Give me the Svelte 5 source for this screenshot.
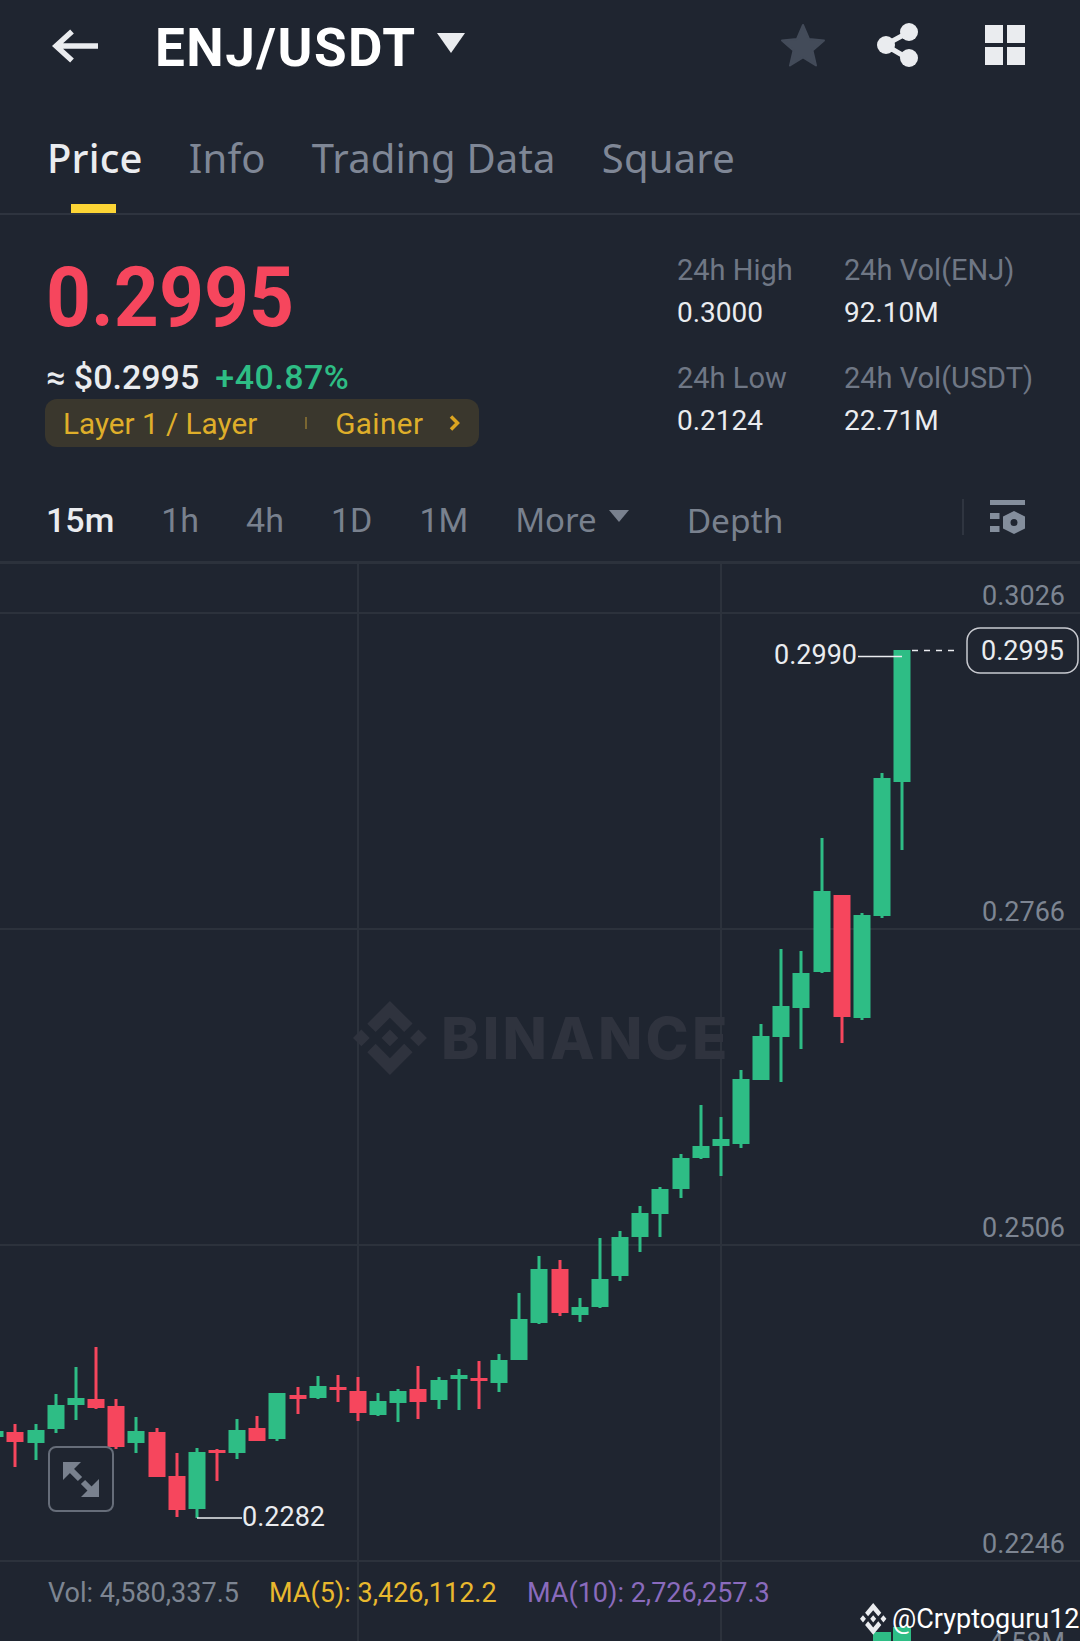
<script>
	const tabs = ['Price', 'Info', 'Trading Data', 'Square'];
	const intervals = ['1h', '4h', '1D', '1M'];
	const gridY = [613, 929, 1245, 1561];
	const axis = [['0.3026', 605], ['0.2766', 921], ['0.2506', 1237], ['0.2246', 1553], ['4.58M', 1652]];

	// x, wick top, wick bottom, body top, body bottom, colour
	const candles = [
		[-5, 1430, 1437, 1431, 1437, 'g'], [15, 1424, 1467, 1432, 1442, 'r'], [36, 1424, 1460, 1430, 1443, 'g'],
		[56, 1394, 1433, 1405, 1429, 'g'], [76, 1367, 1420, 1398, 1405, 'g'], [96, 1347, 1409, 1399, 1408, 'r'],
		[116, 1399, 1449, 1406, 1447, 'r'], [136, 1417, 1453, 1431, 1443, 'g'], [157, 1428, 1477, 1432, 1477, 'r'],
		[177, 1453, 1517, 1476, 1510, 'r'], [197, 1448, 1518, 1452, 1509, 'g'], [217, 1449, 1481, 1450, 1453, 'r'],
		[237, 1419, 1459, 1430, 1453, 'g'], [257, 1416, 1441, 1428, 1441, 'r'], [277, 1393, 1441, 1393, 1439, 'g'],
		[298, 1387, 1414, 1395, 1399, 'r'], [318, 1376, 1399, 1386, 1398, 'g'], [338, 1375, 1402, 1387, 1390, 'r'],
		[358, 1377, 1421, 1391, 1413, 'r'], [378, 1393, 1416, 1401, 1415, 'g'], [398, 1389, 1422, 1391, 1403, 'g'],
		[418, 1366, 1419, 1389, 1402, 'r'], [439, 1377, 1409, 1380, 1400, 'g'], [459, 1369, 1410, 1375, 1379, 'g'],
		[479, 1361, 1409, 1378, 1381, 'r'], [499, 1354, 1392, 1360, 1383, 'g'], [519, 1293, 1360, 1319, 1360, 'g'],
		[539, 1256, 1324, 1269, 1323, 'g'], [560, 1260, 1316, 1269, 1313, 'r'], [580, 1298, 1322, 1307, 1315, 'g'],
		[600, 1238, 1308, 1279, 1307, 'g'], [620, 1231, 1281, 1237, 1276, 'g'], [640, 1206, 1252, 1213, 1237, 'g'],
		[660, 1187, 1237, 1189, 1214, 'g'], [681, 1154, 1198, 1158, 1189, 'g'], [701, 1105, 1159, 1146, 1158, 'g'],
		[721, 1117, 1176, 1139, 1146, 'g'], [741, 1070, 1148, 1079, 1144, 'g'], [761, 1024, 1080, 1036, 1080, 'g'],
		[781, 949, 1082, 1006, 1037, 'g'], [801, 951, 1049, 973, 1008, 'g'], [822, 838, 973, 891, 972, 'g'],
		[842, 895, 1043, 895, 1017, 'r'], [862, 913, 1020, 915, 1018, 'g'], [882, 773, 918, 778, 916, 'g'],
		[902, 650, 850, 650, 782, 'g']
	];

	const logo = 'M16.624 13.9202l2.7175 2.7154-7.353 7.353-7.353-7.352 2.7175-2.7164 4.6355 4.6595 4.6356-4.6595zm4.6366-4.6366L24 12l-2.7154 2.7164L18.5682 12l2.6924-2.7164zm-9.272.001l2.7163 2.6914-2.7164 2.7174v-.001L9.2721 12l2.7164-2.7154zm-9.2722-.001L5.4088 12l-2.6914 2.6924L0 12l2.7164-2.7164zM11.9885.0115l7.353 7.329-2.7174 2.7154-4.6356-4.6356-4.6355 4.6595-2.7174-2.7154 7.353-7.353z';
</script>

<div class="page">
	<header class="top">
		<svg class="back" width="46" height="36" viewBox="0 0 46 36">
			<path d="M46 17H4M20 2.500 4 17l16 14.500" fill="none" stroke="#eaecef" stroke-width="5.500" />
		</svg>
		<h1>ENJ/USDT</h1>
		<span class="title-caret"></span>
		<div class="top-icons">
			<svg width="46" height="46" viewBox="0 0 46 46">
				<path d="M23 3l6 14 15 1.500-11.500 10 3.500 15-13-8-13 8 3.500-15L2 18.500 17 17z" fill="#434b59" stroke="#434b59" stroke-width="2" stroke-linejoin="round" />
			</svg>
			<svg width="46" height="46" viewBox="0 0 46 46">
				<path d="M34 10 10 23l24 14" fill="none" stroke="#eaecef" stroke-width="5" />
				<circle cx="34" cy="10" r="9" fill="#eaecef" />
				<circle cx="11" cy="23" r="9" fill="#eaecef" />
				<circle cx="34" cy="36" r="9" fill="#eaecef" />
			</svg>
			<div class="grid-icon"><i></i><i></i><i></i><i></i></div>
		</div>
	</header>

	<nav class="tabs">
		{#each tabs as tab, i}
			<span class="tab" class:active={i === 0}>{tab}</span>
		{/each}
	</nav>

	<section class="summary">
		<div class="left">
			<div class="price">0.2995</div>
			<div class="sub"><span class="usd">≈ $0.2995</span><span class="change">+40.87%</span></div>
			<div class="badge">
				<span class="tag">Layer 1 / Layer</span>
				<span class="sep"></span>
				<span class="tag">Gainer</span>
				<svg width="13" height="18" viewBox="0 0 13 18"><path d="M3 2.500 9.500 9 3 15.500" fill="none" stroke="#dca520" stroke-width="3.500" /></svg>
			</div>
		</div>
		<div class="stats">
			<div class="stat"><span>24h High</span><b>0.3000</b></div>
			<div class="stat"><span>24h Vol(ENJ)</span><b>92.10M</b></div>
			<div class="stat"><span>24h Low</span><b>0.2124</b></div>
			<div class="stat"><span>24h Vol(USDT)</span><b>22.71M</b></div>
		</div>
	</section>

	<div class="intervals">
		<span class="current">15m</span>
		{#each intervals as item}
			<span>{item}</span>
		{/each}
		<span class="more">More<i></i></span>
		<span class="depth">Depth</span>
		<span class="divider"></span>
		<svg class="settings" width="36" height="36" viewBox="0 0 36 36">
			<path d="M0 1h35v5H0zM0 14h9.500v6H0zM0 27h9.500v6H0z" fill="#848e9c" />
			<path fill-rule="evenodd" d="M24 12l11 5.500v12L24 35l-11-5.500v-12zm0 8a3.500 3.500 0 1 0 0 7 3.500 3.500 0 0 0 0-7z" fill="#848e9c" />
		</svg>
	</div>

	<div class="chart">
		<svg width="1080" height="1077" viewBox="0 564 1080 1077">
			<g fill="#2c323c">
				<rect x="357" y="564" width="2" height="1077" />
				<rect x="720" y="564" width="2" height="1077" />
				{#each gridY as y}
					<rect x="0" y={y - 1} width="1080" height="2" />
				{/each}
			</g>

			<g transform="translate(353 1001) scale(3.08)" fill="#2f333e"><path d={logo} /></g>
			<text class="mark" x="441" y="1059">BINANCE</text>

			{#each axis as [label, y]}
				<text class="axis" x="1065" {y}>{label}</text>
			{/each}

			{#each candles as [x, wickTop, wickBottom, top, bottom, colour]}
				<g fill={colour === 'g' ? '#2ebd85' : '#f6465d'}>
					<rect x={x - 1.500} y={wickTop} width="3" height={wickBottom - wickTop} />
					<rect x={x - 8.500} y={top} width="17" height={bottom - top} />
				</g>
			{/each}

			<rect x="873" y="1632" width="18" height="10" fill="#2ebd85" />
			<rect x="893" y="1627" width="18" height="15" fill="#2ebd85" />

			<path d="M858 656.500H902" stroke="#eaecef" stroke-width="1.500" />
			<text class="mark-price" x="857" y="664" text-anchor="end">0.2990</text>
			<path d="M912 650.500H954" stroke="#eaecef" stroke-width="1.500" stroke-dasharray="6 6" />
			<rect x="967" y="628" width="111" height="45" rx="13" fill="#1f2530" stroke="#c8cad0" stroke-width="1.500" />
			<text class="mark-price" x="1064" y="660" text-anchor="end">0.2995</text>

			<path d="M197 1518H242" stroke="#eaecef" stroke-width="1.500" />
			<text class="mark-price" x="242" y="1526">0.2282</text>

			<rect x="49" y="1447" width="64" height="64" rx="7" fill="#1f2530" fill-opacity="0.7" stroke="#666d79" stroke-width="2" />
			<path d="M63 1462h18l-18 18zM99 1497H81l18-18z" fill="#79818e" />
			<path d="M71 1470l9 9M83 1482l8 8" stroke="#79818e" stroke-width="6" />

			<text class="vol" x="48" y="1602" fill="#7d8592">Vol: 4,580,337.5</text>
			<text class="vol" x="269" y="1602" fill="#e8b82e">MA(5): 3,426,112.2</text>
			<text class="vol" x="527" y="1602" fill="#8a6bbd">MA(10): 2,726,257.3</text>

			<g transform="translate(860 1603) scale(1.1 1.32)" fill="#eaecef"><path d={logo} /></g>
			<text class="credit" x="892" y="1628">@Cryptoguru12</text>
		</svg>
	</div>
</div>

<style>
	:global(body) {
		background: #1f2530;
	}

	.page {
		width: 1080px;
		height: 1641px;
		overflow: hidden;
		background: #1f2530;
		color: #eaecef;
		font-family: Roboto, "Noto Sans", sans-serif;
	}

	.top {
		display: flex;
		align-items: center;
		height: 94px;
		padding: 0 55px 0 52px;
	}

	h1 {
		margin: 2px 0 0 57px;
		font-size: 53px;
		font-weight: 700;
		letter-spacing: 1.5px;
		color: #fff;
	}

	.title-caret {
		width: 0;
		height: 0;
		margin: -9px 0 0 20px;
		border-left: 14px solid transparent;
		border-right: 14px solid transparent;
		border-top: 20px solid #eaecef;
	}

	.top-icons {
		display: flex;
		align-items: center;
		gap: 49px;
		margin: -4px 0 0 auto;
	}

	.grid-icon {
		display: grid;
		grid-template-columns: 18px 18px;
		grid-template-rows: 18px 18px;
		gap: 4px;
		margin-left: 15px;
	}

	.grid-icon i {
		background: #eaecef;
	}

	.tabs {
		display: flex;
		gap: 46px;
		height: 121px;
		padding: 0 47px;
		box-sizing: border-box;
		border-bottom: 2px solid #2e343f;
		font-family: "Noto Sans", sans-serif;
	}

	.tab {
		position: relative;
		padding-top: 40px;
		font-size: 40px;
		line-height: 48px;
		letter-spacing: 0.2px;
		color: #7f8796;
	}

	.tab.active {
		color: #eaecef;
		font-weight: 500;
	}

	.tab.active::after {
		content: '';
		position: absolute;
		left: 24px;
		width: 45px;
		bottom: 0;
		height: 9px;
		background: #fcd535;
	}

	.summary {
		display: flex;
		justify-content: space-between;
		height: 247px;
		padding: 0 45px;
		box-sizing: border-box;
	}

	.price {
		margin: 41px 0 0 1px;
		font-size: 84px;
		line-height: 84px;
		font-weight: 700;
		color: #f6465d;
		transform: scaleX(0.935);
		transform-origin: left;
	}

	.sub {
		display: flex;
		gap: 16px;
		margin-top: 18px;
		padding-left: 1px;
		font-size: 34px;
		line-height: 38px;
		font-weight: 500;
	}

	.change {
		color: #2ebd85;
		letter-spacing: 0.5px;
	}

	.badge {
		display: flex;
		align-items: center;
		width: 434px;
		height: 48px;
		margin-top: 3px;
		padding: 0 18px 0 18px;
		box-sizing: border-box;
		border-radius: 12px;
		background: #3a372d;
	}

	.tag {
		font-size: 29.700px;
		color: #dfae2a;
	}

	.sep {
		width: 2px;
		height: 12px;
		margin: 0 28px 0 48px;
		background: #7a6631;
	}

	.badge .tag:nth-of-type(3) {
		letter-spacing: 0.4px;
	}

	.badge svg {
		margin-left: auto;
	}

	.stats {
		display: grid;
		grid-template-columns: 167px 191px;
		grid-auto-rows: 108px;
		margin-top: 37px;
	}

	.stat {
		display: flex;
		flex-direction: column;
		gap: 8px;
	}

	.stat span {
		font-size: 29px;
		line-height: 36px;
		white-space: nowrap;
		color: #6f7785;
	}

	.stat b {
		font-size: 28px;
		line-height: 34px;
		font-weight: 400;
		color: #eaecef;
	}

	.intervals {
		display: flex;
		align-items: center;
		height: 102px;
		padding: 16px 54px 0 46px;
		box-sizing: border-box;
		border-bottom: 3px solid #2c323c;
		font-size: 34px;
		color: #79818e;
	}

	.intervals span {
		margin-right: 47px;
	}

	.intervals .current {
		color: #eaecef;
		font-weight: 500;
	}

	.intervals .more {
		display: flex;
		align-items: center;
		margin-right: 58px;
		font-family: "Noto Sans", sans-serif;
		font-size: 33px;
	}

	.more i {
		width: 0;
		height: 0;
		margin: -8px 0 0 12px;
		border-left: 10px solid transparent;
		border-right: 10px solid transparent;
		border-top: 12px solid #79818e;
	}

	.intervals .depth {
		font-family: "Noto Sans", sans-serif;
		font-size: 33.500px;
	}

	.intervals .divider {
		width: 2px;
		height: 36px;
		margin: -6px 26px 0 auto;
		background: #2f3540;
	}

	.settings {
		flex: none;
		margin-top: -6px;
	}

	.chart svg {
		display: block;
	}

	.mark {
		font-family: Inter, sans-serif;
		font-size: 58px;
		font-weight: 800;
		letter-spacing: 3.200px;
		fill: #2f333e;
	}

	.axis {
		font-size: 27px;
		text-anchor: end;
		fill: #7d8592;
	}

	.mark-price {
		font-size: 27px;
		fill: #eaecef;
	}

	.vol {
		font-size: 27px;
	}

	.credit {
		font-size: 27px;
		fill: #fff;
	}
</style>
